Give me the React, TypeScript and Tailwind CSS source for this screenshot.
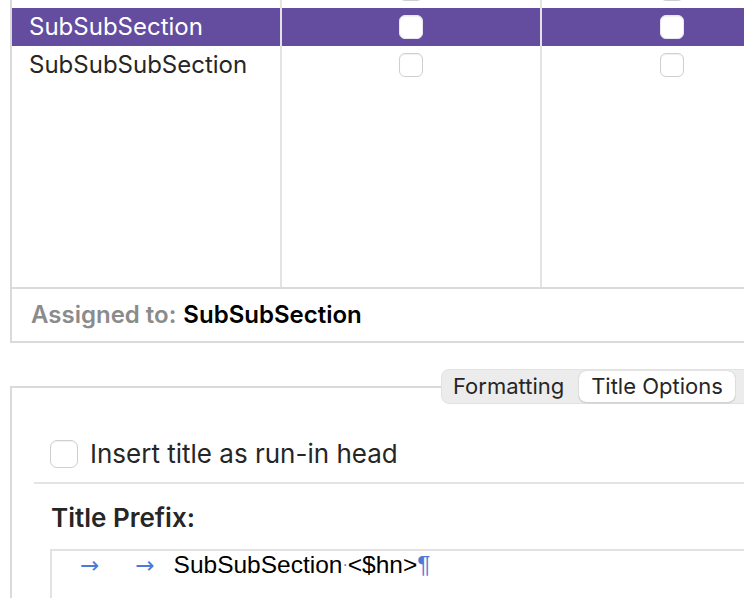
import React from 'react';

const Box: React.FC<{ size?: string; className?: string }> = ({ size = 'w-[24px] h-[24px]', className = '' }) => (
  <div className={`${size} rounded-[6px] border border-[#cfcfcf] bg-white shadow-[inset_0_1px_1px_rgba(0,0,0,0.06)] ${className}`} />
);

const Column: React.FC<{ className: string }> = ({ className }) => (
  <div className={`flex flex-col shrink-0 ${className}`}>
    <div className="h-[8px] overflow-hidden flex justify-center">
      <Box className="-mt-[23px] shrink-0" />
    </div>
    <div className="h-[38px] bg-[#644c9f] flex items-center justify-center">
      <Box className="border-[#e9e6f0]" />
    </div>
    <div className="h-[38px] flex items-center justify-center">
      <Box />
    </div>
  </div>
);

export default function App() {
  return (
    <div className="w-[744px] h-[598px] overflow-hidden bg-white font-['Inter',sans-serif] text-[#262626]">
      {/* style list */}
      <div className="ml-[10px] border-l-2 border-b-2 border-[#dadada]">
        <div className="flex h-[289px] overflow-hidden border-b-2 border-[#dadada]">
          <div className="w-[270px] shrink-0 border-r-2 border-[#e3e3e3] flex flex-col">
            <div className="h-[8px]" />
            <div className="h-[38px] bg-[#644c9f] text-white text-[24px] flex items-center pl-[17px]">SubSubSection</div>
            <div className="h-[38px] text-[24px] flex items-center pl-[17px]">SubSubSubSection</div>
          </div>
          <Column className="w-[260px] border-r-2 border-[#e3e3e3]" />
          <Column className="w-[260px]" />
        </div>
        <div className="h-[52px] flex items-center pl-[19px] text-[24px] font-semibold">
          <span className="text-[#8b8b8b]">Assigned to:</span>
          <span className="ml-[7px] text-black">SubSubSection</span>
        </div>
      </div>

      {/* options panel */}
      <div className="relative mt-[43px] ml-[10px] h-[300px] border-l-2 border-t-2 border-[#dadada]">
        <div className="absolute top-[-19px] left-[429px] h-[35px] w-[330px] flex items-center rounded-[8px] bg-[#ececec] border border-[#e2e2e2] pl-[11px] pr-[2px] text-[22px] text-[#262626]">
          <span className="w-[126px]">Formatting</span>
          <span className="h-[31px] w-[156px] flex items-center justify-center rounded-[7px] bg-white shadow-[0_0_1px_rgba(0,0,0,0.3),0_1px_2px_rgba(0,0,0,0.12)]">Title Options</span>
        </div>

        <div className="mt-[52px] ml-[38px] flex items-center h-[28px]">
          <Box size="w-[28px] h-[28px]" className="rounded-[7px]" />
          <span className="ml-[12px] text-[26px] leading-[28px] text-[#262626]">Insert title as run-in head</span>
        </div>

        <div className="mt-[14px] ml-[22px] h-[2px] bg-[#e4e4e4]" />

        <div className="mt-[19px] ml-[39px] text-[26px] leading-[30px] font-semibold text-[#262626]">Title Prefix:</div>

        <div className="mt-[16px] ml-[38px] h-[60px] border-l-2 border-t-2 border-[#e2e2e2] flex items-start font-['Liberation_Sans',Arial,sans-serif] text-[24.5px] leading-[28px] text-black">
          <span className="ml-[28px] font-['DejaVu_Sans',sans-serif] text-[23px] text-[#4a7bd8]">→</span>
          <span className="ml-[36px] font-['DejaVu_Sans',sans-serif] text-[23px] text-[#4a7bd8]">→</span>
          <span className="ml-[19px]">SubSubSection</span>
          <span className="text-[#4a7bd8] text-[16px]">·</span>
          <span>&lt;$hn&gt;</span>
          <span className="text-[#4a7bd8]">¶</span>
        </div>
      </div>
    </div>
  );
}
